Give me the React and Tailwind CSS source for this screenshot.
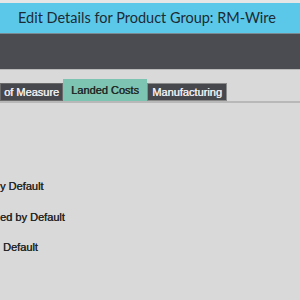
export default function App() {
  return (
    <div className="w-[300px] h-[300px] overflow-hidden bg-[#d9d9d9] flex flex-col whitespace-nowrap" style={{ fontFamily: '"Liberation Sans", Arial, sans-serif' }}>
      <div className="h-[3px] bg-[#e6e6e6] shrink-0" />
      <div className="h-[30px] shrink-0 bg-[#5cc8e9] flex items-center pl-[18px] text-[#1d2b33] text-[14.5px] leading-none" style={{ fontFamily: 'Lato, "Open Sans", sans-serif' }}>
        Edit Details for Product Group: RM-Wire
      </div>
      <div className="h-[1px] bg-[#7a8a92] shrink-0" />
      <div className="h-[35px] bg-[#4b4c51] shrink-0" />
      <div className="h-[1px] bg-[#b9b9b9] shrink-0" />
      <div className="pt-[9px] flex items-end border-b-2 border-[#b8b8b8] shrink-0">
        <div className="h-[18px] w-[63px] shrink-0 bg-[#47484d] text-[#ececef] text-[11px] flex items-center justify-center border border-[#6a6a6a]" style={{ textShadow: '0.4px 0 0 #ececef' }}>of Measure</div>
        <div className="h-[22px] w-[84px] shrink-0 bg-[#7ec4b2] text-[#1e2a28] text-[11px] flex items-center justify-center" style={{ textShadow: '0.4px 0 0 #1e2a28' }}>Landed Costs</div>
        <div className="h-[18px] w-[80px] shrink-0 bg-[#47484d] text-[#ececef] text-[11px] flex items-center justify-center border border-[#8a8a8a]" style={{ textShadow: '0.4px 0 0 #ececef' }}>Manufacturing</div>
      </div>
      <div className="flex flex-col text-[11px] text-[#262626] pt-[77px] leading-[12px]" style={{ textShadow: '0.3px 0 0 #262626' }}>
        <div>y Default</div>
        <div className="mt-[19px]">ed by Default</div>
        <div className="mt-[18px] pl-[3px]">Default</div>
      </div>
    </div>
  );
}
